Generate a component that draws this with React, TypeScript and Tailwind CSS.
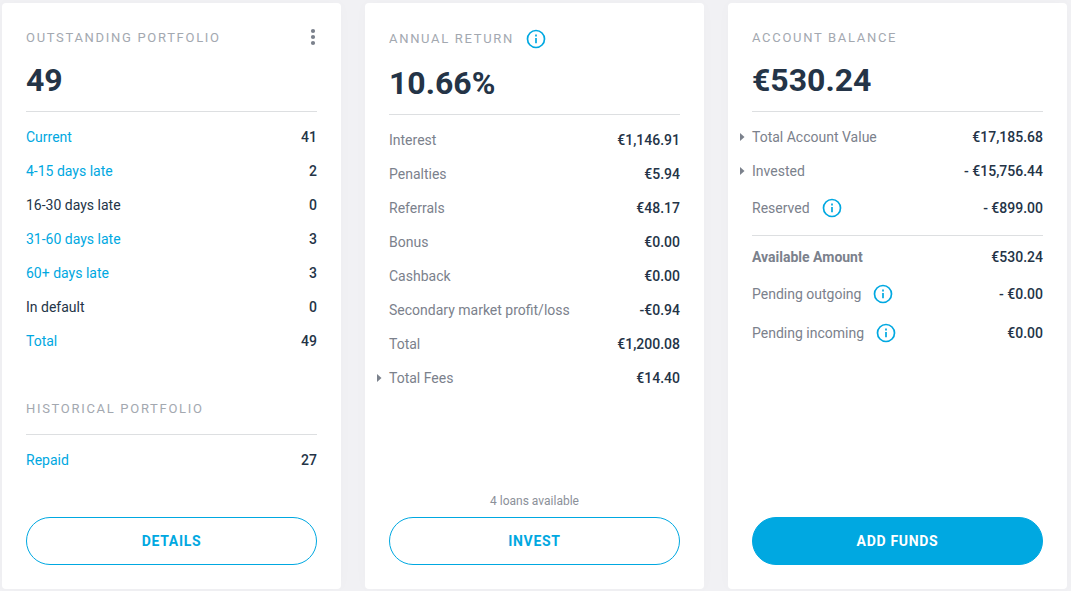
import type { ReactNode } from 'react';
import clsx from 'clsx';

type Tone = 'link' | 'dark' | 'muted' | 'strong';

interface Row {
  label: string;
  value: string;
  tone?: Tone;
  info?: boolean;
  expandable?: boolean;
}

const outstanding: Row[] = [
  { label: 'Current', value: '41', tone: 'link' },
  { label: '4-15 days late', value: '2', tone: 'link' },
  { label: '16-30 days late', value: '0', tone: 'dark' },
  { label: '31-60 days late', value: '3', tone: 'link' },
  { label: '60+ days late', value: '3', tone: 'link' },
  { label: 'In default', value: '0', tone: 'dark' },
  { label: 'Total', value: '49', tone: 'link' },
];

const historical: Row[] = [{ label: 'Repaid', value: '27', tone: 'link' }];

const returns: Row[] = [
  { label: 'Interest', value: '€1,146.91' },
  { label: 'Penalties', value: '€5.94' },
  { label: 'Referrals', value: '€48.17' },
  { label: 'Bonus', value: '€0.00' },
  { label: 'Cashback', value: '€0.00' },
  { label: 'Secondary market profit/loss', value: '-€0.94' },
  { label: 'Total', value: '€1,200.08' },
  { label: 'Total Fees', value: '€14.40', expandable: true },
];

const account: Row[] = [
  { label: 'Total Account Value', value: '€17,185.68', expandable: true },
  { label: 'Invested', value: '- €15,756.44', expandable: true },
  { label: 'Reserved', value: '- €899.00', info: true },
];

const available: Row[] = [
  { label: 'Available Amount', value: '€530.24', tone: 'strong' },
  { label: 'Pending outgoing', value: '- €0.00', info: true },
  { label: 'Pending incoming', value: '€0.00', info: true },
];

const tones: Record<Tone, string> = {
  link: 'font-normal text-[#00a8e1]',
  dark: 'font-normal text-[#243447]',
  muted: 'font-normal text-[#7b818c]',
  strong: 'font-bold text-[#7b818c]',
};

function InfoButton({ about }: { about: string }) {
  return (
    <button type="button" aria-label={`About ${about}`} className="shrink-0 text-[#00a8e1]">
      <svg viewBox="0 0 20 20" className="block size-5" fill="none" stroke="currentColor" strokeWidth="1.7">
        <circle cx="10" cy="10" r="8.5" />
        <path d="M10 9v5.2M10 5.6v1.9" />
      </svg>
    </button>
  );
}

function RowLabel({ row }: { row: Row }) {
  if (row.tone === 'link') return <a href="#" className="hover:underline">{row.label}</a>;

  if (row.expandable) {
    return (
      <button type="button" aria-expanded={false} className="-ml-3 flex items-center">
        <svg viewBox="0 0 12 8" className="h-2 w-3" fill="currentColor">
          <path d="M0 0l4.5 4L0 8z" />
        </svg>
        {row.label}
      </button>
    );
  }

  return (
    <span className="flex items-center gap-3">
      {row.label}
      {row.info && <InfoButton about={row.label} />}
    </span>
  );
}

function Rows({ rows, className }: { rows: Row[]; className?: string }) {
  return (
    <div className={clsx('border-t border-[#dddfe1]', className)}>
      <table className="w-full text-sm">
        <tbody>
          {rows.map(row => (
            <tr key={row.label} className={row.info ? 'h-[39px]' : 'h-[34px]'}>
              <th scope="row" className={clsx('p-0 text-left', tones[row.tone ?? 'muted'])}>
                <RowLabel row={row} />
              </th>
              <td className="p-0 text-right font-medium whitespace-nowrap text-[#243447]">{row.value}</td>
            </tr>
          ))}
        </tbody>
      </table>
    </div>
  );
}

function Title({ children }: { children: ReactNode }) {
  return <h2 className="text-[13px] leading-[22px] tracking-[0.13em] text-[#a3a8b0] uppercase">{children}</h2>;
}

function Amount({ children }: { children: ReactNode }) {
  return <p className="my-2.5 text-[32px] leading-[42px] font-bold text-[#243447]">{children}</p>;
}

function Card({ children }: { children: ReactNode }) {
  return <section className="flex flex-col rounded-sm bg-white p-6 shadow-[0_0_16px_rgba(0,0,0,0.02)]">{children}</section>;
}

function Action({ children, filled }: { children: ReactNode; filled?: boolean }) {
  return (
    <button
      type="button"
      className={clsx(
        'h-12 w-full rounded-full border border-[#00a8e1] text-sm font-bold tracking-wider uppercase',
        filled ? 'bg-[#00a8e1] text-white' : 'bg-white text-[#00a8e1]',
      )}
    >
      {children}
    </button>
  );
}

export default function App() {
  return (
    <main className="grid min-h-screen grid-cols-3 content-start gap-6 bg-[#f1f1f4] pt-[3px] pr-1 pb-0.5 pl-0.5 font-[Roboto,sans-serif]">
      {/* Portfolio */}
      <Card>
        <div className="flex items-center justify-between">
          <Title>Outstanding Portfolio</Title>
          <button type="button" aria-label="Portfolio options" className="-mr-1.5 pb-0.5 text-[#7b818c]">
            <svg viewBox="0 0 20 20" className="block size-5" fill="currentColor">
              <circle cx="10" cy="4" r="2.1" />
              <circle cx="10" cy="10" r="2.1" />
              <circle cx="10" cy="16" r="2.1" />
            </svg>
          </button>
        </div>
        <Amount>49</Amount>
        <Rows rows={outstanding} className="pt-2" />
        <div className="mt-10 mb-3.5">
          <Title>Historical Portfolio</Title>
        </div>
        <Rows rows={historical} className="pt-2" />
        <div className="mt-auto pt-10">
          <Action>Details</Action>
        </div>
      </Card>

      {/* Annual return */}
      <Card>
        <div className="flex h-[25px] items-center gap-3 pb-0.5">
          <Title>Annual Return</Title>
          <InfoButton about="annual return" />
        </div>
        <Amount>10.66%</Amount>
        <Rows rows={returns} className="pt-2" />
        <div className="mt-auto">
          <p className="mb-1.5 text-center text-xs leading-5 text-[#8b9099]">4 loans available</p>
          <Action>Invest</Action>
        </div>
      </Card>

      {/* Account balance */}
      <Card>
        <Title>Account Balance</Title>
        <Amount>€530.24</Amount>
        <Rows rows={account} className="pt-2" />
        <Rows rows={available} className="mt-2 pt-1" />
        <div className="mt-auto pt-10">
          <Action filled>Add Funds</Action>
        </div>
      </Card>
    </main>
  );
}
